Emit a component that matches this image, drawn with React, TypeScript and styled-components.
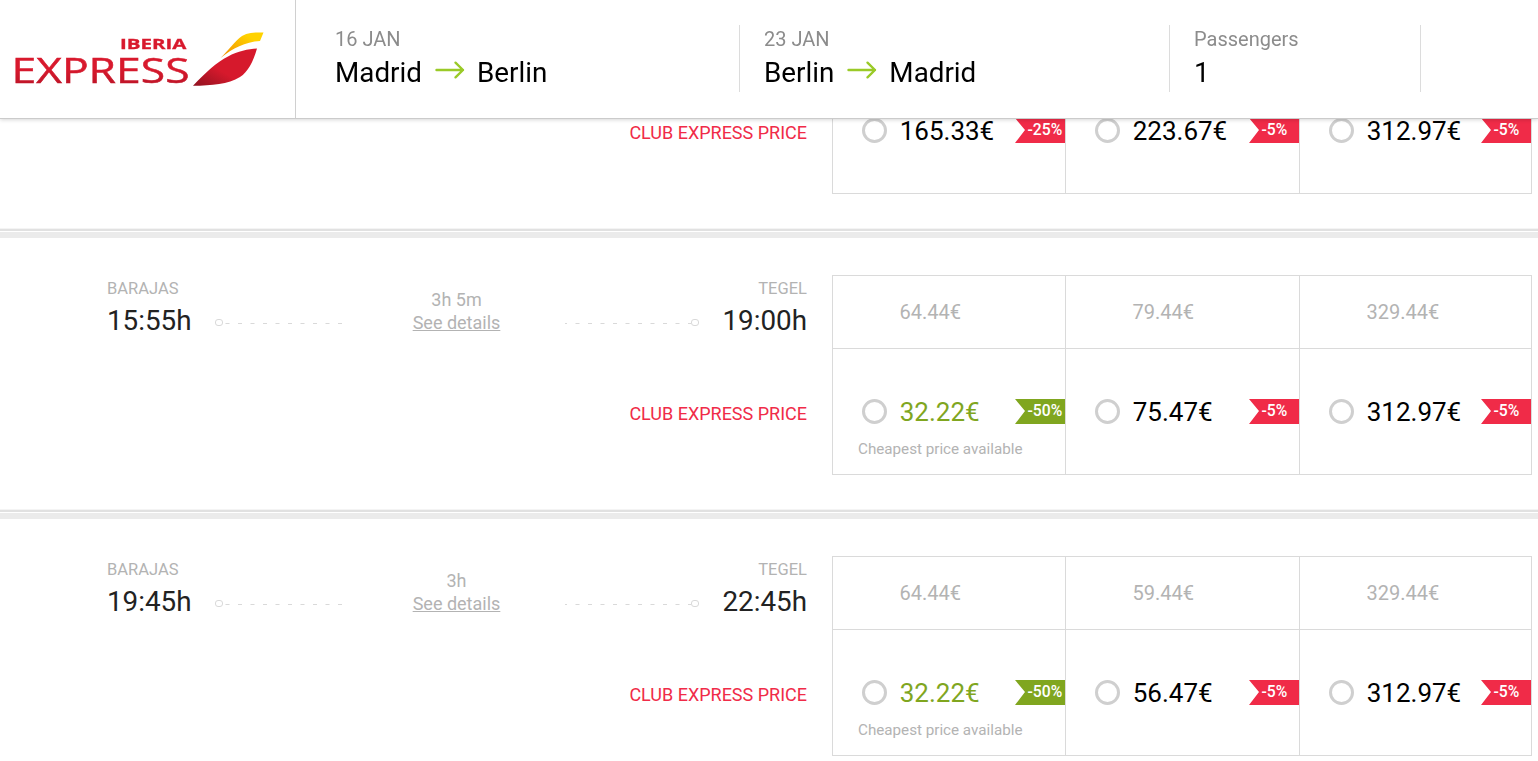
import * as React from "react";
import { createGlobalStyle, styled } from "styled-components";

const GlobalStyle = createGlobalStyle`
	* {
		box-sizing: border-box;
	}

	body {
		margin: 0;
		background-color: #fff;
		font-family: Roboto, "Liberation Sans", sans-serif;
		overflow: hidden;
	}
`;

const Page = styled.div`
	height: 761px;
	overflow: hidden;
`;

const Header = styled.header`
	position: fixed;
	top: 0;
	left: 0;
	right: 0;
	z-index: 2;
	display: flex;
	height: 119px;
	background-color: #fff;
	border-bottom: 1px solid #cbcbcb;
	box-shadow: 0 1px 4px rgba(0, 0, 0, 0.16);
`;

const Brand = styled.div`
	width: 296px;
	padding: 28px 0 0 10px;
	border-right: 1px solid #d0d0d0;

	svg {
		display: block;
	}
`;

const Summary = styled.div`
	display: flex;
	padding-top: 25px;
`;

const SummaryItem = styled.div<{ $width: number; $indent: number }>`
	width: ${(p) => p.$width}px;
	height: 67px;
	padding-left: ${(p) => p.$indent}px;
	border-right: 1px solid #dcdcdc;
`;

const SummaryLabel = styled.div`
	margin-top: 2px;
	font-size: 20px;
	line-height: 24px;
	color: #8c8c8c;
`;

const SummaryValue = styled.div`
	display: flex;
	align-items: center;
	margin-top: 5px;
	font-size: 27.8px;
	line-height: 34px;
	color: #000;

	svg {
		margin: -6px 12px 0 13px;
	}
`;

const FlightList = styled.main`
	margin-top: -43px;
`;

const FlightRow = styled.section`
	display: flex;
	height: 281px;
	padding-top: 37px;
	border-bottom: 6px solid #ebebeb;
	background: linear-gradient(#f4f4f4 0 1px, #e1e1e1 1px 3px, #fff 3px 4px)
		left bottom / 100% 4px no-repeat;
`;

const Journey = styled.div`
	width: 832px;
	padding: 0 25px 0 107px;
`;

const Schedule = styled.div`
	display: flex;
	height: 73px;
`;

const Stop = styled.div<{ $end?: boolean }>`
	width: 108px;
	padding-top: 4px;
	text-align: ${(p) => (p.$end ? "right" : "left")};
`;

const Airport = styled.div`
	font-size: 16.5px;
	line-height: 20px;
	color: #b3b3b3;
`;

const Time = styled.div`
	margin-top: 5px;
	font-size: 27.8px;
	line-height: 34px;
	color: #222;
`;

const Path = styled.div`
	padding-top: 42px;

	svg {
		display: block;
	}
`;

const Duration = styled.div`
	width: 222px;
	padding: 13px 0 0 5px;
	text-align: center;
	font-size: 18px;
	line-height: 23px;
	color: #b3b3b3;

	a {
		text-decoration: underline;
	}
`;

const ClubLabel = styled.div`
	margin-top: 55px;
	text-align: right;
	font-size: 18px;
	line-height: 22px;
	color: #f02b48;
`;

const Fares = styled.div`
	display: grid;
	grid-template-columns: 233px 234px 232px;
	grid-template-rows: 73px 126px;
	height: 200px;
	border-top: 1px solid #dadada;
	border-left: 1px solid #dadada;
`;

const Cell = styled.div`
	border-right: 1px solid #dadada;
	border-bottom: 1px solid #dadada;
`;

const BaseFare = styled(Cell)`
	padding: 24px 0 0 66.5px;
	font-size: 20px;
	line-height: 24px;
	color: #b3b3b3;
`;

const ClubFare = styled(Cell)`
	padding-top: 50px;
`;

const FareLine = styled.div`
	display: flex;
	align-items: center;
	height: 25px;
	padding-left: 29px;
`;

const Radio = styled.span`
	width: 25px;
	height: 25px;
	border: 3px solid #cfcfcf;
	border-radius: 50%;
`;

const Price = styled.span<{ $cheapest?: boolean }>`
	flex: 1;
	padding-left: 12.7px;
	font-size: 26px;
	line-height: 30px;
	color: ${(p) => (p.$cheapest ? "#80a61f" : "#000")};
`;

const Discount = styled.span<{ $cheapest?: boolean }>`
	width: 50px;
	height: 25px;
	padding-left: 12.5px;
	font-size: 15.7px;
	font-weight: 500;
	line-height: 23px;
	color: #fff;
	background-color: ${(p) => (p.$cheapest ? "#80a61f" : "#f02b48")};
	clip-path: polygon(0 0, 100% 0, 100% 100%, 0 100%, 10px 12px);
`;

const Note = styled.div`
	padding: 16px 0 0 25px;
	font-size: 15.2px;
	line-height: 18px;
	color: #b3b3b3;
`;

type Fare = {
	base: string;
	club: string;
	off: string;
	cheapest?: boolean;
};

type Flight = {
	departs: string;
	arrives: string;
	duration: string;
	fares: Fare[];
};

const flights: Flight[] = [
	{
		departs: "",
		arrives: "",
		duration: "",
		fares: [
			{ base: "", club: "165.33€", off: "-25%" },
			{ base: "", club: "223.67€", off: "-5%" },
			{ base: "", club: "312.97€", off: "-5%" },
		],
	},
	{
		departs: "15:55h",
		arrives: "19:00h",
		duration: "3h 5m",
		fares: [
			{ base: "64.44€", club: "32.22€", off: "-50%", cheapest: true },
			{ base: "79.44€", club: "75.47€", off: "-5%" },
			{ base: "329.44€", club: "312.97€", off: "-5%" },
		],
	},
	{
		departs: "19:45h",
		arrives: "22:45h",
		duration: "3h",
		fares: [
			{ base: "64.44€", club: "32.22€", off: "-50%", cheapest: true },
			{ base: "59.44€", club: "56.47€", off: "-5%" },
			{ base: "329.44€", club: "312.97€", off: "-5%" },
		],
	},
];

const Logo = () => (
	<svg width="258" height="70" viewBox="10 28 258 70">
		<defs>
			<linearGradient id="word" x1="0" y1="0" x2="0" y2="1">
				<stop offset="0.5" stopColor="#d8192d" />
				<stop offset="1" stopColor="#b01224" />
			</linearGradient>
			<linearGradient id="tail" x1="0" y1="1" x2="0.7" y2="0.3">
				<stop offset="0" stopColor="#8f1220" />
				<stop offset="0.6" stopColor="#d6192c" />
			</linearGradient>
			<linearGradient id="crest" x1="0" y1="1" x2="1" y2="0">
				<stop offset="0" stopColor="#f18a00" />
				<stop offset="0.75" stopColor="#ffd200" />
			</linearGradient>
		</defs>
		<text
			x="120"
			y="48.500"
			fontFamily="Open Sans, sans-serif"
			fontWeight="700"
			fontSize="14.500"
			textLength="66.500"
			lengthAdjust="spacingAndGlyphs"
			fill="#d8192d"
			stroke="#d8192d"
			strokeWidth="0.300"
		>
			IBERIA
		</text>
		<text
			x="11.500"
			y="83"
			fontFamily="Open Sans, sans-serif"
			fontSize="35.500"
			textLength="178"
			lengthAdjust="spacingAndGlyphs"
			fill="url(#word)"
			stroke="url(#word)"
			strokeWidth="0.500"
		>
			EXPRESS
		</text>
		<path
			d="M193 85.800C206 72 217 62 228 56.500C238 51 248 49 257 48.500C253 62 248 72 240 77C228 84.500 212 85.500 193 85.800Z"
			fill="url(#tail)"
		/>
		<path
			d="M220.500 58C228 51 235 41 242 36C248 32.300 255 32.500 263.500 32.500L260 41C245 42 233 48 220.500 58Z"
			fill="url(#crest)"
		/>
	</svg>
);

const Arrow = () => (
	<svg width="30" height="18" viewBox="0 0 30 18" fill="none" stroke="#9aca28" strokeWidth="2.400" strokeLinecap="round" strokeLinejoin="round">
		<path d="M1.500 9H28M20.500 1.700L28 9L20.500 16.300" />
	</svg>
);

const DepartPath = () => (
	<Path>
		<svg width="128" height="12" viewBox="0 0 128 12" fill="none" stroke="#d9d9d9">
			<rect x="0.500" y="2.500" width="7" height="6" rx="2.500" />
			<path d="M10.500 6.500H128" strokeDasharray="4 8.500" />
		</svg>
	</Path>
);

const ArrivePath = () => (
	<Path>
		<svg width="134" height="12" viewBox="0 0 134 12" fill="none" stroke="#d9d9d9">
			<path d="M0 6.500H2M10.500 6.500H126" strokeDasharray="4 8.500" />
			<rect x="126.500" y="2.500" width="7" height="6" rx="2.500" />
		</svg>
	</Path>
);

const FlightItem = ({ flight }: { flight: Flight }) => (
	<FlightRow>
		<Journey>
			<Schedule>
				{flight.departs && (
					<>
						<Stop>
							<Airport>BARAJAS</Airport>
							<Time>{flight.departs}</Time>
						</Stop>
						<DepartPath />
						<Duration>
							{flight.duration}
							<br />
							<a>See details</a>
						</Duration>
						<ArrivePath />
						<Stop $end>
							<Airport>TEGEL</Airport>
							<Time>{flight.arrives}</Time>
						</Stop>
					</>
				)}
			</Schedule>
			<ClubLabel>CLUB EXPRESS PRICE</ClubLabel>
		</Journey>
		<Fares>
			{flight.fares.map((fare, i) => (
				<BaseFare key={i}>{fare.base}</BaseFare>
			))}
			{flight.fares.map((fare, i) => (
				<ClubFare key={i}>
					<FareLine>
						<Radio />
						<Price $cheapest={fare.cheapest}>{fare.club}</Price>
						<Discount $cheapest={fare.cheapest}>{fare.off}</Discount>
					</FareLine>
					{fare.cheapest && <Note>Cheapest price available</Note>}
				</ClubFare>
			))}
		</Fares>
	</FlightRow>
);

const App = () => {
	return (
		<>
			<GlobalStyle />
			<Page>
				<Header>
					<Brand>
						<Logo />
					</Brand>
					<Summary>
						<SummaryItem $width={444} $indent={39}>
							<SummaryLabel>16 JAN</SummaryLabel>
							<SummaryValue>
								Madrid <Arrow /> Berlin
							</SummaryValue>
						</SummaryItem>
						<SummaryItem $width={430} $indent={24}>
							<SummaryLabel>23 JAN</SummaryLabel>
							<SummaryValue>
								Berlin <Arrow /> Madrid
							</SummaryValue>
						</SummaryItem>
						<SummaryItem $width={251} $indent={24}>
							<SummaryLabel>Passengers</SummaryLabel>
							<SummaryValue>1</SummaryValue>
						</SummaryItem>
					</Summary>
				</Header>
				<FlightList>
					{flights.map((flight, i) => (
						<FlightItem key={i} flight={flight} />
					))}
				</FlightList>
			</Page>
		</>
	);
};

export default App;
